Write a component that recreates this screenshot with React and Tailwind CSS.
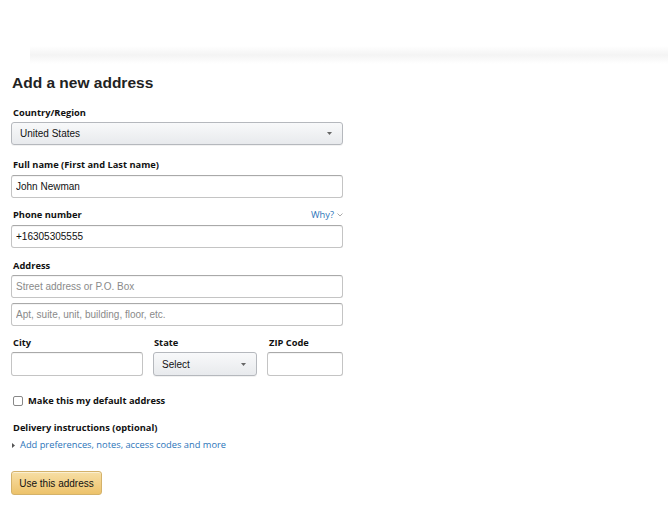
import { useState } from 'react'

const labelCls = "font-['Open_Sans',sans-serif] font-bold text-[9.3px] leading-[14px] text-[#111]"
const inputCls =
  "block w-full h-[23px] border border-[#c4c4c4] border-t-[#a9a9a9] rounded-[3px] bg-white px-[4px] font-['Liberation_Sans',Arial,sans-serif] text-[10px] text-[#111] placeholder:text-[#8a8a8a] shadow-[inset_0_1px_0_rgba(0,0,0,0.04)] outline-none"

const Caret = () => (
  <svg width="5" height="3" viewBox="0 0 5 3" className="shrink-0">
    <path d="M0 0h5L2.5 3z" fill="#666" />
  </svg>
)

const SelectBox = ({ value, className }) => (
  <div
    className={`flex items-center justify-between h-[23px] border border-[#b5b8bd] rounded-[3px] bg-gradient-to-b from-[#f8f9fa] to-[#e8eaed] pl-[8px] pr-[10px] shadow-[0_1px_0_rgba(0,0,0,0.05)] ${className}`}
  >
    <span className="font-['Liberation_Sans',Arial,sans-serif] text-[10px] text-[#111]">{value}</span>
    <Caret />
  </div>
)

export default function App() {
  const [isDefault, setIsDefault] = useState(false)

  return (
    <div className="w-[668px] h-[531px] bg-white overflow-hidden">
      {/* faint top band */}
      <div className="h-[46px]" />
      <div className="h-[18px] ml-[30px] bg-gradient-to-b from-white via-[#f4f4f4] to-white" />

      <div className="pl-[11px] w-[343px]">
        <h1 className="mt-[9px] font-['Liberation_Sans',Arial,sans-serif] font-bold text-[15.5px] leading-[20px] text-[#222] pl-[1px]">
          Add a new address
        </h1>

        <div className="mt-[13px]">
          <div className={`${labelCls} pl-[2px]`}>Country/Region</div>
          <SelectBox value="United States" className="mt-[2px]" />
        </div>

        <div className="mt-[13px]">
          <div className={`${labelCls} pl-[2px]`}>Full name (First and Last name)</div>
          <input className={`${inputCls} mt-[3px]`} defaultValue="John Newman" />
        </div>

        <div className="mt-[10px]">
          <div className="flex items-center justify-between">
            <div className={`${labelCls} pl-[2px]`}>Phone number</div>
            <div className="flex items-center gap-[3px] font-['Open_Sans',sans-serif] text-[9.3px] text-[#2b74b9]">
              Why?
              <svg width="6" height="4" viewBox="0 0 6 4">
                <path d="M0.5 0.5L3 3l2.5-2.5" stroke="#aaa" strokeWidth="1" fill="none" />
              </svg>
            </div>
          </div>
          <input className={`${inputCls} mt-[3px]`} defaultValue="+16305305555" />
        </div>

        <div className="mt-[11px]">
          <div className={`${labelCls} pl-[2px]`}>Address</div>
          <input className={`${inputCls} mt-[2px]`} placeholder="Street address or P.O. Box" />
          <input className={`${inputCls} mt-[5px]`} placeholder="Apt, suite, unit, building, floor, etc." />
        </div>

        <div className="mt-[10px] flex gap-[10px]">
          <div className="w-[132px]">
            <div className={`${labelCls} pl-[2px]`}>City</div>
            <input className={`${inputCls} mt-[2px] h-[24px]`} />
          </div>
          <div className="w-[104px]">
            <div className={`${labelCls} pl-[1px]`}>State</div>
            <SelectBox value="Select" className="mt-[2px] h-[24px]" />
          </div>
          <div className="w-[76px]">
            <div className={`${labelCls} pl-[2px]`}>ZIP Code</div>
            <input className={`${inputCls} mt-[2px] h-[24px]`} />
          </div>
        </div>

        <label className="mt-[18px] flex items-center gap-[5px] pl-[2px] cursor-pointer">
          <span
            onClick={() => setIsDefault(!isDefault)}
            className="w-[10px] h-[10px] border border-[#888] rounded-[2px] bg-white"
          />
          <span className={labelCls}>Make this my default address</span>
        </label>

        <div className="mt-[13px]">
          <div className={`${labelCls} pl-[2px]`}>Delivery instructions (optional)</div>
          <div className="mt-[3px] flex items-center gap-[5px] pl-[1px]">
            <svg width="3" height="5" viewBox="0 0 3 5">
              <path d="M0 0l3 2.5L0 5z" fill="#555" />
            </svg>
            <span className="font-['Open_Sans',sans-serif] text-[9.3px] leading-[14px] text-[#2b74b9]">
              Add preferences, notes, access codes and more
            </span>
          </div>
        </div>

        <button className="mt-[19px] h-[24px] w-[91px] border border-[#d4b26a] rounded-[3px] bg-gradient-to-b from-[#f7dfa5] to-[#edc26a] font-['Liberation_Sans',Arial,sans-serif] text-[10px] text-[#111] shadow-[inset_0_1px_0_rgba(255,255,255,0.5)]">
          Use this address
        </button>
      </div>
    </div>
  )
}
